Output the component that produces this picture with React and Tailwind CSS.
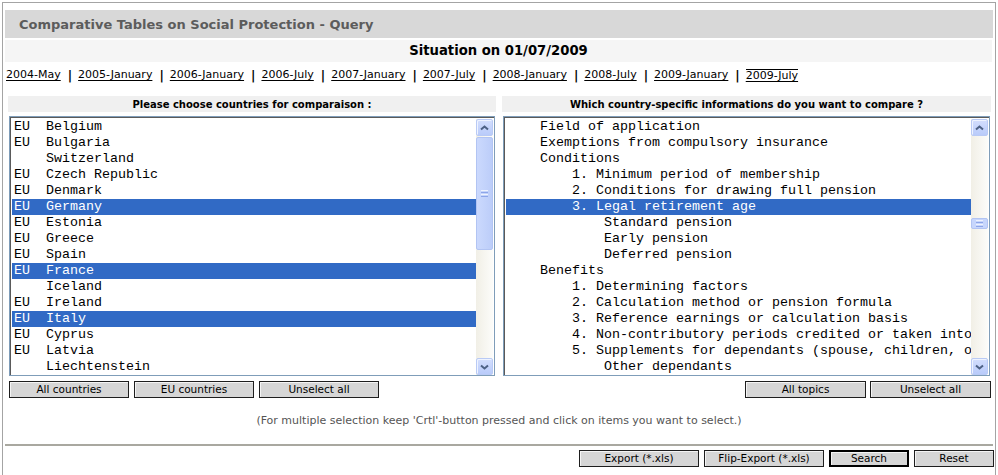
import React from "react";

const countries = [
  ["EU", "Belgium", false],
  ["EU", "Bulgaria", false],
  ["", "Switzerland", false],
  ["EU", "Czech Republic", false],
  ["EU", "Denmark", false],
  ["EU", "Germany", true],
  ["EU", "Estonia", false],
  ["EU", "Greece", false],
  ["EU", "Spain", false],
  ["EU", "France", true],
  ["", "Iceland", false],
  ["EU", "Ireland", false],
  ["EU", "Italy", true],
  ["EU", "Cyprus", false],
  ["EU", "Latvia", false],
  ["", "Liechtenstein", false],
];

const topics = [
  ["    Field of application", false],
  ["    Exemptions from compulsory insurance", false],
  ["    Conditions", false],
  ["        1. Minimum period of membership", false],
  ["        2. Conditions for drawing full pension", false],
  ["        3. Legal retirement age", true],
  ["            Standard pension", false],
  ["            Early pension", false],
  ["            Deferred pension", false],
  ["    Benefits", false],
  ["        1. Determining factors", false],
  ["        2. Calculation method or pension formula", false],
  ["        3. Reference earnings or calculation basis", false],
  ["        4. Non-contributory periods credited or taken into account", false],
  ["        5. Supplements for dependants (spouse, children, other)", false],
  ["            Other dependants", false],
];

const periods = [
  "2004-May",
  "2005-January",
  "2006-January",
  "2006-July",
  "2007-January",
  "2007-July",
  "2008-January",
  "2008-July",
  "2009-January",
  "2009-July",
];

// bouton de défilement (style XP)
function ArrowButton({ down }) {
  return (
    <div className="h-[17px] w-[17px] rounded-[2px] border border-[#b9caf5] bg-gradient-to-b from-[#d3defd] to-[#b9cbfa] flex items-center justify-center shadow-[inset_1px_1px_0_#eef3ff]">
      <svg width="9" height="6" viewBox="0 0 9 6">
        <path
          d={down ? "M1 1.5 L4.5 4.5 L8 1.5" : "M1 4.5 L4.5 1.5 L8 4.5"}
          fill="none"
          stroke="#4d6185"
          strokeWidth="2"
        />
      </svg>
    </div>
  );
}

function Thumb({ small }) {
  return (
    <div
      className={
        small
          ? "mt-[82px] h-[11px] w-[17px] rounded-[2px] border border-[#b2c4f3] bg-[#c7d6fc] flex flex-col items-center justify-center gap-[1px]"
          : "mt-[1px] h-[113px] w-[17px] rounded-[2px] border border-[#b2c4f3] bg-gradient-to-r from-[#cbd9fd] to-[#bccdf9] flex flex-col items-center justify-center gap-[1px]"
      }
    >
      <div className="h-px w-[7px] bg-[#eef2fd]" />
      <div className="h-px w-[7px] bg-[#8da5e8]" />
      <div className="h-px w-[7px] bg-[#eef2fd]" />
      <div className="h-px w-[7px] bg-[#8da5e8]" />
    </div>
  );
}

function Scrollbar({ small }) {
  return (
    <div className="w-[17px] h-full flex flex-col bg-gradient-to-r from-[#f1efe6] to-[#fcfcfa]">
      <ArrowButton />
      <div className="flex-1">
        <Thumb small={small} />
      </div>
      <ArrowButton down />
    </div>
  );
}

function ListBox({ children, small }) {
  return (
    <div className="mx-[1px] mt-[4px] h-[260px] border border-[#7f9db9] bg-white">
      <div className="h-full flex border-t border-l border-[#5a5a5a] pl-[1px] pt-px pr-[1px]">
        <div className="flex-1 overflow-hidden">{children}</div>
        <Scrollbar small={small} />
      </div>
    </div>
  );
}

function Row({ selected, children }) {
  return (
    <div
      className={
        "h-[16px] leading-[16px] pl-[2px] whitespace-pre text-[13.33px] font-['Liberation_Mono',monospace] " +
        (selected ? "bg-[#316ac5] text-white" : "text-black")
      }
    >
      {children}
    </div>
  );
}

function Btn({ children, w = "w-[120px]", strong }) {
  return (
    <button
      className={
        w +
        " h-[17px] bg-[#d6d6d6] text-[10.5px] leading-none text-black flex items-center justify-center shadow-[inset_1px_1px_0_#f4f4f4] " +
        (strong ? "border-2 border-black" : "border border-[#1e1e1e]")
      }
    >
      {children}
    </button>
  );
}

export default function App() {
  return (
    <div className="w-[998px] h-[475px] overflow-hidden bg-white font-['DejaVu_Sans',Verdana,sans-serif]">
      <div className="ml-[2px] mt-[2px] w-[994px] h-[480px] border border-[#a4a4a4] px-[1px] pt-[7px]">
        {/* titre */}
        <div className="ml-[1px] mr-px h-[28px] bg-[#d8d8d8] pl-[14px] pt-[1px] flex items-center text-[13px] font-bold text-[#5c5c5c]">
          Comparative Tables on Social Protection - Query
        </div>
        <div className="ml-[1px] mr-[2px] mt-[2px] h-[22px] bg-[#f5f5f5] flex items-center justify-center text-[13.2px] font-bold text-black">
          Situation on 01/07/2009
        </div>

        {/* périodes */}
        <div className="h-[26px] pl-[2px] pt-[1px] flex items-center text-[11px] text-black">
          {periods.map((p, i) => (
            <React.Fragment key={p}>
              {i > 0 && <span className="ml-[7px] mr-[6px] font-bold text-[12px]">|</span>}
              <a
                href="#"
                className={
                  "underline underline-offset-2 " +
                  (p === "2009-July" ? "border-t border-black leading-[12px]" : "")
                }
              >
                {p}
              </a>
            </React.Fragment>
          ))}
        </div>

        {/* listes */}
        <div className="mt-[8px] pl-[4px] pr-[2px] flex gap-[6px]">
          <div className="w-[488px]">
            <div className="h-[16px] bg-[#f0f0f0] flex items-center justify-center text-[10px] font-bold text-black">
              Please choose countries for comparaison :
            </div>
            <ListBox>
              {countries.map(([eu, name, sel]) => (
                <Row key={name} selected={sel}>
                  {(eu || "  ") + "  " + name}
                </Row>
              ))}
            </ListBox>
            <div className="mt-[5px] ml-[1px] flex gap-[5px]">
              <Btn>All countries</Btn>
              <Btn>EU countries</Btn>
              <Btn>Unselect all</Btn>
            </div>
          </div>
          <div className="w-[489px]">
            <div className="h-[16px] bg-[#f0f0f0] flex items-center justify-center text-[10px] font-bold text-black">
              Which country-specific informations do you want to compare ?
            </div>
            <ListBox small>
              {topics.map(([t, sel]) => (
                <Row key={t} selected={sel}>
                  {t}
                </Row>
              ))}
            </ListBox>
            <div className="mt-[5px] flex justify-end gap-[4px]">
              <Btn w="w-[121px]">All topics</Btn>
              <Btn w="w-[121px]">Unselect all</Btn>
            </div>
          </div>
        </div>

        <div className="h-[46px] flex items-center justify-center text-[11px] text-[#555]">
          (For multiple selection keep 'Crtl'-button pressed and click on items you want to select.)
        </div>
        <div className="ml-[1px] mr-px h-[2px] bg-[#a9a8a0]" />
        <div className="mt-[4px] flex justify-end gap-[5px]">
          <Btn>Export (*.xls)</Btn>
          <Btn>Flip-Export (*.xls)</Btn>
          <Btn w="w-[80px]" strong>
            Search
          </Btn>
          <Btn w="w-[80px]">Reset</Btn>
        </div>
        <div className="mt-[8px] ml-[1px] mr-px h-[2px] bg-[#a9a8a0]" />
      </div>
    </div>
  );
}
